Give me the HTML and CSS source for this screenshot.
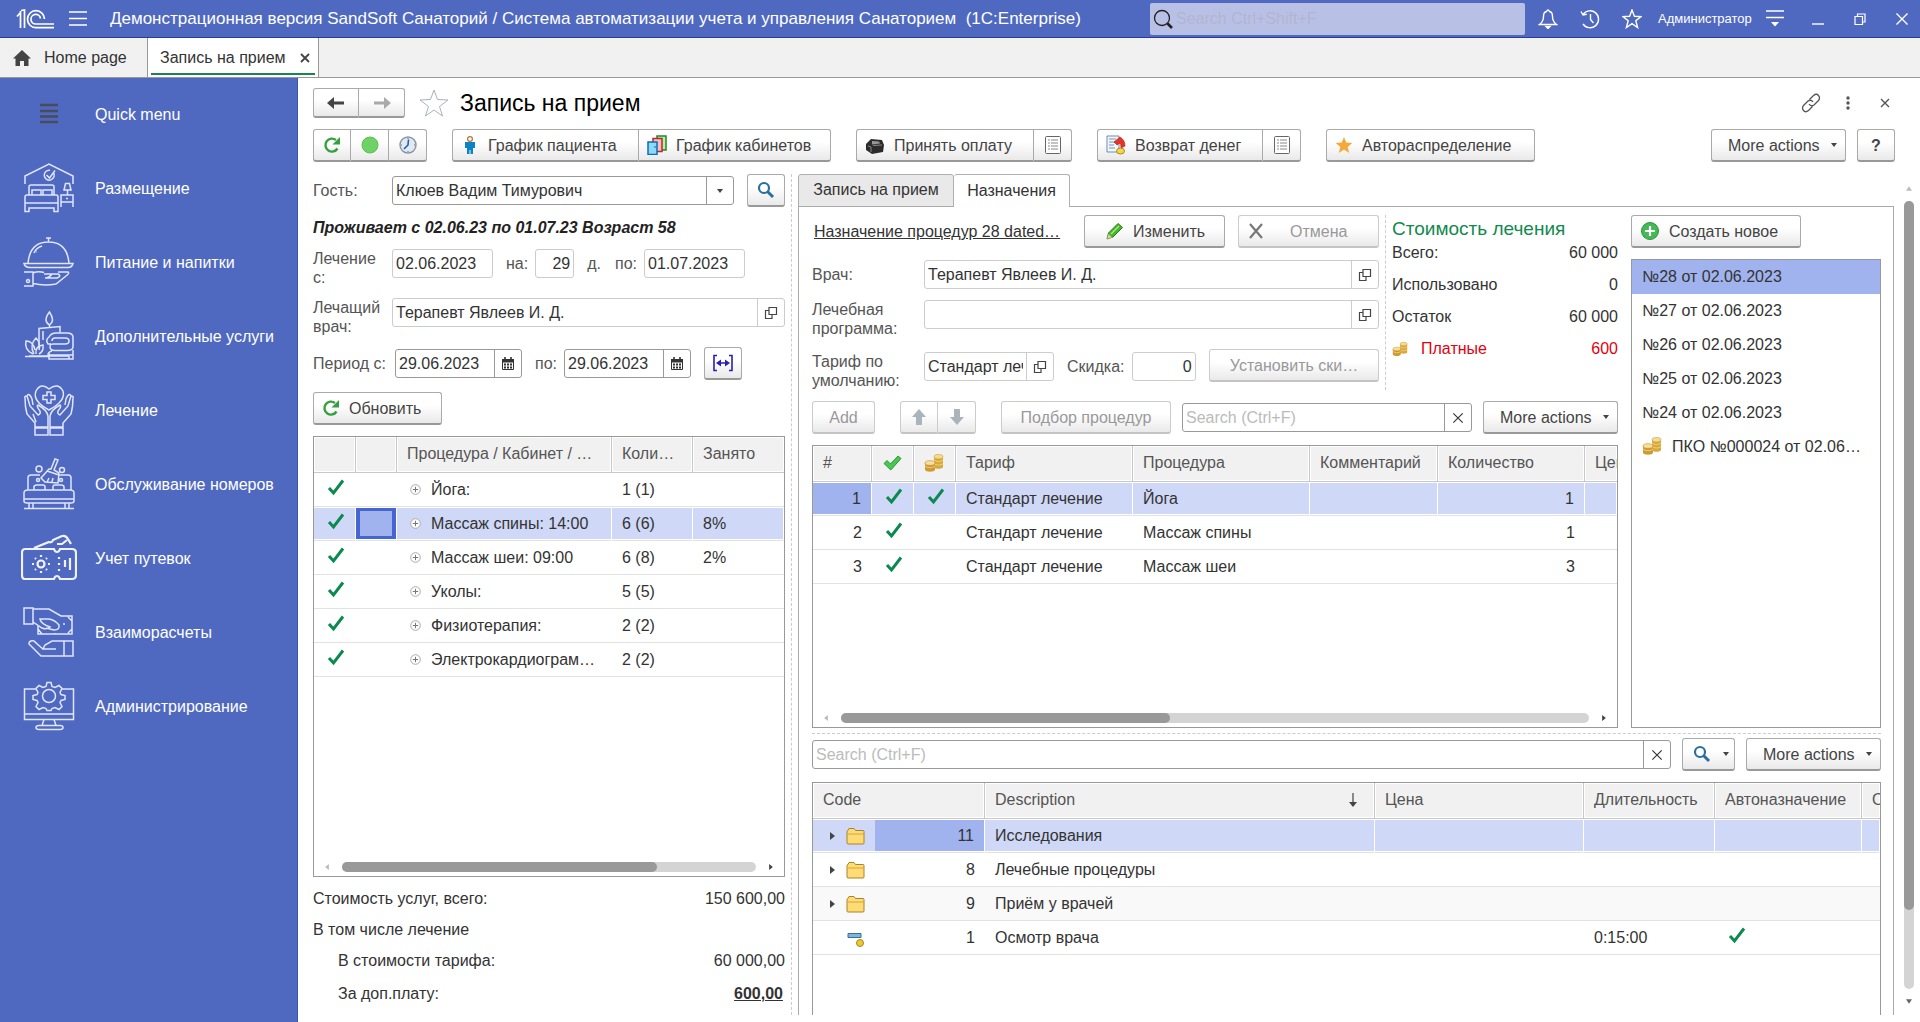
FILE: index.html
```html
<!DOCTYPE html>
<html lang="ru">
<head>
<meta charset="utf-8">
<title>Запись на прием</title>
<link rel="stylesheet" href="styles.css">
</head>
<body>
<svg class="sprite" aria-hidden="true">
  <symbol id="check" viewBox="0 0 18 18"><path d="M2 10l4.500 5L16 2.500" fill="none" stroke="#0b8a50" stroke-width="3"/></symbol>
  <symbol id="check-lime" viewBox="0 0 20 18"><path d="M2 9.500l3-3 3.500 3.500L16 2l3 2.500L8.800 16z" fill="#4cc552" stroke="#249a35" stroke-linejoin="round"/></symbol>
  <symbol id="coins" viewBox="0 0 20 20">
    <path d="M10 4v10c0 2.400 9 2.400 9 0V4z" fill="#d9a93c"/><path d="M10 7c2 2 7 2 9 0M10 10.500c2 2 7 2 9 0" fill="none" stroke="#efd27a"/><ellipse cx="14.500" cy="3.700" rx="4.500" ry="2.200" fill="#f3dd8c" stroke="#c99a3a" stroke-width=".6"/>
    <path d="M1 10v6.500c0 3 10 3 10 0V10z" fill="#cf9a35"/><path d="M1 13c2 2.200 8 2.200 10 0" fill="none" stroke="#efd27a"/><ellipse cx="6" cy="10" rx="5" ry="2.300" fill="#f5e19a" stroke="#c08d32" stroke-width=".6"/>
  </symbol>
  <symbol id="refresh" viewBox="0 0 18 18"><path d="M14.500 12.500A6.500 6.500 0 1 1 13 4" fill="none" stroke="#35a03f" stroke-width="2.400"/><path d="M17 1v7.500H9.500z" fill="#35a03f"/></symbol>
  <symbol id="caret" viewBox="0 0 6 4"><path d="M0 0h6L3 4z" fill="#444"/></symbol>
  <symbol id="open" viewBox="0 0 14 14"><path d="M5 1.500h7.500v7H5zM5 4.500H1.500v8H8V8.500" fill="none" stroke="#444" stroke-width="1.200"/></symbol>
  <symbol id="calendar" viewBox="0 0 14 14"><path d="M1.500 2.500h11v10h-11z" fill="none" stroke="#333"/><path d="M1 2h12v3.500H1z" fill="#333"/><path d="M4 0v3M10 0v3" stroke="#333" stroke-width="1.600"/><path d="M3 7.500h8M3 10.500h8" stroke="#333" stroke-width="1.800" stroke-dasharray="2 1"/></symbol>
  <symbol id="lens" viewBox="0 0 18 18"><circle cx="7" cy="7" r="5" fill="#fff" stroke="#2a6f9f" stroke-width="2.200"/><path d="M10.500 10.500L16 16" stroke="#2a6f9f" stroke-width="3"/></symbol>
  <symbol id="cross" viewBox="0 0 12 12"><path d="M2 2l8 8M10 2l-8 8" fill="none" stroke="currentColor"/></symbol>
  <symbol id="list" viewBox="0 0 16 18"><rect x=".5" y=".5" width="15" height="17" rx="1" fill="#fff" stroke="#666"/><path d="M3 4h2M3 7h2M3 10h2M3 13h2M6 4h7M6 7h7M6 10h7M6 13h7" stroke="#888"/></symbol>
  <symbol id="expand" viewBox="0 0 11 11"><circle cx="5.500" cy="5.500" r="4.800" fill="#fff" stroke="#aaa"/><path d="M2.800 5.500h5.400M5.500 2.800v5.400" stroke="#777"/></symbol>
  <symbol id="folder" viewBox="0 0 19 18"><path d="M1 16V4.500Q1 3.500 2 3.500l1-2h5l1.500 2H17q1 0 1 1V16q0 1-1 1H2q-1 0-1-1z" fill="#ffdc73" stroke="#a9822f"/><path d="M1 7h17" stroke="#d2a545"/></symbol>
  <symbol id="tri-right" viewBox="0 0 5 8"><path d="M0 0l5 4-5 4z" fill="currentColor"/></symbol>
  <symbol id="tri-left" viewBox="0 0 5 8"><path d="M5 0L0 4l5 4z" fill="currentColor"/></symbol>
  <symbol id="arrow-fat" viewBox="0 0 16 18"><path d="M8 1l7 8h-4v8H5V9H1z" fill="#aab4bb"/></symbol>
</svg>

<header class="topbar">
  <svg class="logo" viewBox="0 0 38 20" fill="none" stroke="#fff" stroke-width="1.700"><path d="M1 7.500l3.500-4M4.500 19V2M8.500 19V1L5 1.500"/><path d="M28.500 10A8.500 8.500 0 1 0 20 18.700H38"/><path d="M24.500 9.500A4.800 4.800 0 1 0 20 15H38M20.500 10"/></svg>
  <svg class="burger" viewBox="0 0 18 15" stroke="#fff" stroke-width="1.400"><path d="M0 1h18M0 7.500h18M0 14h18"/></svg>
  <span class="app-title">Демонстрационная версия SandSoft Санаторий / Система автоматизации учета и управления Санаторием&nbsp; (1С:Enterprise)</span>
  <label class="global-search">
    <svg viewBox="0 0 20 20" fill="none" stroke="#222"><circle cx="9" cy="9" r="7.500" stroke-width="1.300"/><path d="M14.500 14.500L19 19" stroke-width="2.600"/></svg>
    <input type="search" placeholder="Search Ctrl+Shift+F" aria-label="Search">
  </label>
  <div class="top-icons">
    <svg viewBox="0 0 20 20" fill="none" stroke="#fff" stroke-width="1.400"><path d="M1.500 15.500q4-3 4-8 0-4.500 3-5 1.500-3 3 0 3 .5 3 5 0 5 4 8z"/><path d="M8 17.500h4L10 19.500z" fill="#fff"/></svg>
    <svg viewBox="0 0 20 20" fill="none" stroke="#fff" stroke-width="1.400"><path d="M3 5.500A8.500 8.500 0 1 1 3 15M1 2.500l2 3.500 3.800-.8M10.500 5v5.500l3 3.500"/></svg>
    <svg viewBox="0 0 20 20" fill="none" stroke="#fff" stroke-width="1.400"><path d="M10 1l2.400 6.300 6.600.3-5.200 4.200 1.800 6.700L10 14.700l-5.600 3.800 1.800-6.700L1 7.600l6.600-.3z"/></svg>
  </div>
  <span class="user">Администратор</span>
  <svg class="user-menu" viewBox="0 0 18 17" stroke="#fff" stroke-width="1.400"><path d="M0 1h18M0 7.500h18"/><path d="M5 12h8l-4 4.500z" fill="#fff" stroke="none"/></svg>
  <div class="window-icons">
    <svg viewBox="0 0 12 12" stroke="#fff" stroke-width="1.400"><path d="M0 11h12"/></svg>
    <svg viewBox="0 0 12 12" fill="none" stroke="#fff" stroke-width="1.200"><path d="M1 3.500h7.500v8H1zM3.500 3.500V1H11v8H8.500"/></svg>
    <svg viewBox="0 0 12 12" stroke="#fff" stroke-width="1.400"><path d="M.5.5l11 11M11.500.5l-11 11"/></svg>
  </div>
</header>

<div class="tabs">
  <a class="tab tab-home" href="#"><svg viewBox="0 0 18 16"><path d="M9 0L0 8.500h2.500V16h4.500v-5h4v5h4.500V8.500H18z" fill="#444"/></svg>Home page</a>
  <a class="tab tab-active" href="#">Запись на прием<svg viewBox="0 0 10 10"><path d="M1 1l8 8M9 1L1 9" stroke="#444" stroke-width="1.800"/></svg></a>
</div>

<div class="body">
<nav class="sidebar">
  <a href="#"><svg viewBox="0 0 56 50"><path d="M19 16h18M19 22h18M19 27.500h18M19 33h18"/></svg>Quick menu</a>
  <a href="#"><svg viewBox="0 0 56 50"><path d="M4 21V13L28 1l24 12v8"/><path d="M32.500 9.500A5 5 0 1 1 29 7.200M25.500 12l3 3L34 7.500"/><path d="M8 32V24q0-2 2-2h21q2 0 2 2v8M11 32v-5h9v5M22 32v-5h9v5M4 48.500V34q0-2 2-2h29q2 0 2 2v14.500h-4V45H8v3.500zM4 40h33"/><path d="M43 27l1.500-6.500h4L50 27zM46.500 27v5M40 44V32h12v12M40 39h12M45 35.500h2"/></svg>Размещение</a>
  <a href="#"><svg viewBox="0 0 56 50"><path d="M25 1h5M27.500 1v4M7 26Q9 5 27.500 5T48 26M13 16q2-5 8-7M15 15h.5"/><path d="M3 26.500h49q-1 4-5 4H9q-5 0-6-4z"/><path d="M3 35h9v14H3M7 42.500a1.500 1.500 0 1 0 .1 0M12 36q5-2 11-.5M23 37h14q4 2-1 4H24q4 0 7-4M37 35h10q2 1-2 4l-10 8q-12 2-23-.5"/></svg>Питание и напитки</a>
  <a href="#"><svg viewBox="0 0 56 50"><path d="M28.500 1q-7 9 0 13 6-4 0-13zM28.500 14v3M18 36V17.500l21-2v6M22 20v9"/><path d="M30 33h-3q-3-4 1-7 2-4 7-4h11q6 0 6 4.500v9q0 4-6 4H34q-5 0-5-3.500t4-3h11q4 0 4-3t-4-3H34q-3 0-3 3M31 40q-4 1-4 4h25v-5M8 45h40M4 45.500h25M28 45v3h20v-3M28 42v6h24v-6"/><path d="M12 43Q3 39 5 30q7 0 9 9M13 43q-5-9 2-16 5 5 3 12M15 43q-1-8 7-9 1 6-4 9"/></svg>Дополнительные услуги</a>
  <a href="#"><svg viewBox="0 0 56 52"><path d="M28 26Q11 17 15 7q5-9 13-2 9-7 14 2 3 10-14 19z"/><path d="M26 8h4v3.500h4v4h-4V19h-4v-3.500h-4v-4h4z"/><path d="M4 14q-1-2 2-2l3 10 8 9q3-1 2-4-4-5-2-6 9 5 10 11v12H14v-5L6 30q-2-7-2-16zM15 38l-3-8M52 14q1-2-2-2l-3 10-8 9q-3-1-2-4 4-5 2-6-9 5-10 11v12h13v-5l8-9q2-7 2-16zM14 43v8h13v-8zM29 43v8h13v-8zM6 12q2-4 5 3l1 6M50 12q-2-4-5 3l-1 6"/></svg>Лечение</a>
  <a href="#"><svg viewBox="0 0 56 52"><path d="M7 32V20q0-3 3-3h9M38 17h9q3 0 3 3v12M3 39v-4q0-3 4-3h42q4 0 4 3v8q0 2-3 2H6q-3 0-3-2zM3 41h50M8 45v5M12 45v5M48 45v5M44 45v5M3 50.500h50M13 32v-3q0-2 3-2h6q2 0 2 2v3M32 32v-3q0-2 2-2h6q3 0 3 2v3"/><path d="M34 1l3 1-4 10 5 3-1 10-13-1-4-4 8-9h2zM26 13l12 4M28 20l-2 4M32 20l-1 4"/><circle cx="18" cy="11" r="3"/><circle cx="41" cy="12" r="2.500"/><circle cx="17" cy="22" r="1.500"/><circle cx="40" cy="22" r="1.500"/></svg>Обслуживание номеров</a>
  <a href="#"><svg class="bold" viewBox="0 0 56 46"><path d="M4 14h29q1 3 3 3t3-3h12q4 0 4 4v22q0 4-4 4H39q-1-3-3-3t-3 3H4q-3 0-3-4V18q0-4 3-4zM13 13l15-6q3 1 4-2l9-4q4-1 6 3l3 5M36 9h5l5-4"/><circle cx="20" cy="29" r="3.500"/><path d="M20 20v2M20 36v2M11 29h2M27 29h2M14 23l1 1M25 34l1 1M26 23l-1 1M15 34l-1 1M38 22v2M38 28v2M38 34v2M44 25v7M49 23v12"/></svg>Учет путевок</a>
  <a href="#"><svg viewBox="0 0 56 50"><path d="M3 1h9v16H3zM12 2h16l12 7h11v18H17v-9M12 15l9 6q5 2 8-1-9-3-10-8h9q6 1 10 6 1 5-5 5l-8-2M47 10l4 4M47 26l4-4M17 22l4 5M34 26v1M42 17h2"/><path d="M43 34h9v15h-9zM43 34H31l-7 4-2 4h13M22 42q-6-5-9-8-5-1-5 3l12 12h23"/></svg>Взаиморасчеты</a>
  <a href="#"><svg viewBox="0 0 56 50"><path d="M15 8H3.500v30.500h49V8H41M3.500 33h49M23 38.500l-2 6M33 38.500l2 6M18 44.500h21q3 0 3 2t-3 2H18q-3 0-3-2t3-2z"/><path d="M26 1.500h4l1 4 3 1 4-2 3 3-2 4 1 2 4 1v4l-4 1-1 2 2 4-3 3-4-2-3 1-1 2h-4l-1-2-3-1-4 2-3-3 2-4-1-2-4-1v-4l4-1 1-2-2-4 3-3 4 2 3-1z"/><circle cx="28" cy="15" r="6.500"/></svg>Администрирование</a>
</nav>

<main class="page">
  <div class="title-row">
    <div class="group">
      <button class="btn nav" aria-label="Назад"><svg viewBox="0 0 18 14"><path d="M7 1v4.500h10v3H7V13L0 7z" fill="#444"/></svg></button>
      <button class="btn nav" aria-label="Вперед"><svg viewBox="0 0 18 14"><path d="M11 1v4.500H1v3h10V13l7-6z" fill="#aaa"/></svg></button>
    </div>
    <svg class="fav" viewBox="0 0 30 28"><path d="M15 1l3.500 9.500L29 11l-8.500 6.500 3 9.500L15 21l-8.500 6 3-9.500L1 11l10.500-.5z" fill="#fff" stroke="#aab0ba"/></svg>
    <h1>Запись на прием</h1>
    <div class="title-icons">
      <svg viewBox="0 0 20 20" fill="none" stroke="#555" stroke-width="1.300"><path d="M8.500 6.500l4-4q3-2.500 5 0t0 5l-4.500 4.500q-3 2-5-1M11.500 13.500l-4 4q-3 2.500-5 0t0-5L7 8q3-2 5 1"/></svg>
      <svg viewBox="0 0 20 20" fill="#555"><circle cx="10" cy="5" r="1.700"/><circle cx="10" cy="10" r="1.700"/><circle cx="10" cy="15" r="1.700"/></svg>
      <svg viewBox="0 0 20 20" stroke="#555" stroke-width="1.400"><path d="M6 6l8 8M14 6l-8 8"/></svg>
    </div>
  </div>

  <div class="toolbar">
    <div class="group">
      <button class="btn icon-btn" aria-label="Обновить"><svg class="i18"><use href="#refresh"/></svg></button>
      <button class="btn icon-btn" aria-label="Статус"><svg class="i18" viewBox="0 0 18 18"><circle cx="9" cy="9" r="8" fill="#6fd267" stroke="#5cc055"/></svg></button>
      <button class="btn icon-btn" aria-label="Время"><svg class="i18" viewBox="0 0 18 18"><circle cx="9" cy="9" r="8" fill="#dfeaf5" stroke="#8796a6" stroke-width="1.400"/><path d="M9.500 3.500L9 9l-4 4" fill="none" stroke="#1f5fb0" stroke-width="1.600"/><path d="M9 2v1M9 15v1M2 9h1M15 9h1" stroke="#a55"/></svg></button>
    </div>
    <div class="group">
      <button class="btn text-btn w-patient"><svg class="i18" viewBox="0 0 18 18"><circle cx="9" cy="3" r="2.400" fill="#fff" stroke="#b8742c" stroke-width="1.200"/><path d="M4 6h10v6h-2v6H9.500v-4h-1v4H6v-6H4z" fill="#0c84c4"/></svg>График пациента</button>
      <button class="btn text-btn w-rooms"><svg class="i20" viewBox="0 0 20 20"><path d="M10 1h9v14h-9z" fill="#b9f0a8" stroke="#1a8a2c" stroke-width="1.500"/><path d="M6 3.500h9v13H6z" fill="#f7c1c1" stroke="#c8202c" stroke-width="1.500"/><path d="M1 7h9v12.500H1z" fill="#8fd8f7" stroke="#0a6fb5" stroke-width="1.500"/><path d="M7 12h2" stroke="#0a6fb5"/></svg>График кабинетов</button>
    </div>
    <div class="group">
      <button class="btn text-btn w-pay"><svg class="i20" viewBox="0 0 20 20"><path d="M1 9l5-5 11 1 2 5-1 7-11 2-6-4z" fill="#2c2c2c"/><path d="M7 6l7 .5 1 2-8 1z" fill="#999"/><path d="M3 11l3 1v5M8 10.500l9-.5" stroke="#888" fill="none"/></svg>Принять оплату</button>
      <button class="btn list-btn" aria-label="Список оплат"><svg class="list-icon"><use href="#list"/></svg></button>
    </div>
    <div class="group">
      <button class="btn text-btn w-refund"><svg class="i20" viewBox="0 0 20 20"><path d="M1 1h12v16H1z" fill="#f2f7fc" stroke="#6d8db0"/><path d="M3 4h7M3 7h6M3 10h5M3 13h6" stroke="#7a93ad"/><path d="M8 7l6-5q5 3 5 9l-4 2q0-4-1-5l-3 2z" fill="#e5332a" stroke="#a81b16" stroke-width=".6"/><ellipse cx="14.500" cy="16" rx="4" ry="3" fill="#f4d64a" stroke="#b28a1c"/></svg>Возврат денег</button>
      <button class="btn list-btn" aria-label="Список возвратов"><svg class="list-icon"><use href="#list"/></svg></button>
    </div>
    <button class="btn text-btn w-auto"><svg class="i18" viewBox="0 0 18 18"><path d="M9 1l2.300 5.600 6 .4-4.600 3.900 1.500 6L9 13.600 3.800 16.900l1.500-6L.7 7l6-.4z" fill="#f6a93b"/></svg>Автораспределение</button>
    <button class="btn more push">More actions<svg class="caret"><use href="#caret"/></svg></button>
    <button class="btn help">?</button>
  </div>

  <div class="content">
    <section class="left">
      <div class="row center">
        <label class="lab" for="guest">Гость:</label>
        <div class="field dark guest"><input id="guest" value="Клюев Вадим Тимурович"><button class="in-btn" aria-label="Выбрать"><svg class="caret"><use href="#caret"/></svg></button></div>
        <button class="btn icon-btn" aria-label="Найти"><svg class="i18"><use href="#lens"/></svg></button>
      </div>
      <p class="stay">Проживает с 02.06.23 по 01.07.23 Возраст 58</p>
      <div class="row">
        <label class="lab" for="treat-from">Лечение с:</label>
        <div class="field date"><input id="treat-from" value="02.06.2023"></div>
        <label class="mid" for="days">на:</label>
        <div class="field days"><input class="num" id="days" value="29"></div>
        <span class="mid unit">д.</span>
        <label class="mid" for="treat-to">по:</label>
        <div class="field date"><input id="treat-to" value="01.07.2023"></div>
      </div>
      <div class="row">
        <label class="lab" for="doctor">Лечащий врач:</label>
        <div class="field grow"><input id="doctor" value="Терапевт Явлеев И. Д."><button class="in-btn" aria-label="Открыть"><svg class="i14"><use href="#open"/></svg></button></div>
      </div>
      <div class="row center">
        <label class="lab-period" for="from">Период с:</label>
        <div class="field dark period"><input id="from" value="29.06.2023"><button class="in-btn" aria-label="Календарь"><svg class="i14"><use href="#calendar"/></svg></button></div>
        <label class="mid" for="to">по:</label>
        <div class="field dark period"><input id="to" value="29.06.2023"><button class="in-btn" aria-label="Календарь"><svg class="i14"><use href="#calendar"/></svg></button></div>
        <button class="btn icon-btn range" aria-label="Интервал"><svg viewBox="0 0 22 18"><path d="M5 1.500H2v15h3M17 1.500h3v15h-3M6 9h10" fill="none" stroke="#2b1fb0" stroke-width="1.600"/><path d="M9 5.500v7L4 9zM13 5.500v7L18 9z" fill="#2b1fb0"/></svg></button>
      </div>
      <button class="btn text-btn w-refresh"><svg class="i18"><use href="#refresh"/></svg>Обновить</button>
      <div class="grid-box left-grid">
        <table class="t-left">
          <colgroup><col class="c42"><col class="c41"><col><col class="c81"><col class="c91"></colgroup>
          <thead><tr><th></th><th></th><th>Процедура / Кабинет / …</th><th>Коли…</th><th>Занято</th></tr></thead>
          <tbody>
            <tr><td class="mark"><svg><use href="#check"/></svg></td><td></td><td class="tree"><svg><use href="#expand"/></svg>Йога:</td><td>1 (1)</td><td></td></tr>
            <tr class="sel"><td class="mark"><svg><use href="#check"/></svg></td><td class="focus"></td><td class="tree"><svg><use href="#expand"/></svg>Массаж спины: 14:00</td><td>6 (6)</td><td>8%</td></tr>
            <tr><td class="mark"><svg><use href="#check"/></svg></td><td></td><td class="tree"><svg><use href="#expand"/></svg>Массаж шеи: 09:00</td><td>6 (8)</td><td>2%</td></tr>
            <tr><td class="mark"><svg><use href="#check"/></svg></td><td></td><td class="tree"><svg><use href="#expand"/></svg>Уколы:</td><td>5 (5)</td><td></td></tr>
            <tr><td class="mark"><svg><use href="#check"/></svg></td><td></td><td class="tree"><svg><use href="#expand"/></svg>Физиотерапия:</td><td>2 (2)</td><td></td></tr>
            <tr><td class="mark"><svg><use href="#check"/></svg></td><td></td><td class="tree"><svg><use href="#expand"/></svg>Электрокардиограм…</td><td>2 (2)</td><td></td></tr>
          </tbody>
        </table>
        <div class="hscroll"><svg class="off"><use href="#tri-left"/></svg><div class="track"><div class="thumb thumb-left"></div></div><svg><use href="#tri-right"/></svg></div>
      </div>
      <dl class="totals">
        <dt>Стоимость услуг, всего:</dt><dd>150 600,00</dd>
        <dt>В том числе лечение</dt><dd></dd>
        <dt class="sub">В стоимости тарифа:</dt><dd>60 000,00</dd>
        <dt class="sub last">За доп.плату:</dt><dd class="last"><a href="#">600,00</a></dd>
      </dl>
    </section>

    <section class="right">
      <div class="panel-tabs"><button class="ptab">Запись на прием</button><button class="ptab on">Назначения</button></div>
      <div class="panel">
        <div class="upper">
          <div class="upper-main">
            <div class="head">
              <div class="form">
                <div class="row center">
                  <a class="doc-link" href="#">Назначение процедур 28 dated…</a>
                  <button class="btn text-btn w-edit"><svg class="i18" viewBox="0 0 18 18"><path d="M1 17l1.500-6L12 1.500l4.500 4L7 15z" fill="#45b52c" stroke="#2b7d1b"/><path d="M5 12l8-8" stroke="#a6ec8a" stroke-width="1.500"/><path d="M1 17l1.500-5 3.500 3.500z" fill="#e8c89a"/></svg>Изменить</button>
                  <button class="btn text-btn w-cancel" disabled><svg class="i18" viewBox="0 0 18 18"><path d="M3 2l12 14M15 2L3 16" stroke="#777" stroke-width="2.200"/></svg>Отмена</button>
                </div>
                <div class="row center doc-row">
                  <label class="rlab" for="doc2">Врач:</label>
                  <div class="field grow"><input id="doc2" value="Терапевт Явлеев И. Д."><button class="in-btn" aria-label="Открыть"><svg class="i14"><use href="#open"/></svg></button></div>
                </div>
                <div class="row">
                  <label class="rlab" for="prog">Лечебная программа:</label>
                  <div class="field grow"><input id="prog" value=""><button class="in-btn" aria-label="Открыть"><svg class="i14"><use href="#open"/></svg></button></div>
                </div>
                <div class="row tariff-row">
                  <label class="rlab" for="tariff">Тариф по умолчанию:</label>
                  <div class="field tariff"><input id="tariff" value="Стандарт лечение"><button class="in-btn" aria-label="Открыть"><svg class="i14"><use href="#open"/></svg></button></div>
                  <label class="mid" for="disc">Скидка:</label>
                  <div class="field disc"><input class="num" id="disc" value="0"></div>
                  <button class="btn w-disc" disabled>Установить ски…</button>
                </div>
              </div>
              <div class="cost">
                <h2>Стоимость лечения</h2>
                <dl>
                  <dt>Всего:</dt><dd>60 000</dd>
                  <dt>Использовано</dt><dd>0</dd>
                  <dt>Остаток</dt><dd>60 000</dd>
                  <dt class="paid"><svg><use href="#coins"/></svg>Платные</dt><dd class="paid">600</dd>
                </dl>
              </div>
            </div>
            <div class="row center actions">
              <button class="btn w-add" disabled>Add</button>
              <div class="group arrows">
                <button class="btn icon-btn" disabled aria-label="Вверх"><svg class="i18"><use href="#arrow-fat"/></svg></button>
                <button class="btn icon-btn" disabled aria-label="Вниз"><svg class="i18 flip"><use href="#arrow-fat"/></svg></button>
              </div>
              <button class="btn w-pick" disabled>Подбор процедур</button>
              <div class="field dark grow search"><input type="text" placeholder="Search (Ctrl+F)" aria-label="Поиск процедур"><button class="in-btn" aria-label="Очистить"><svg class="i14"><use href="#cross"/></svg></button></div>
              <button class="btn more">More actions<svg class="caret"><use href="#caret"/></svg></button>
            </div>
            <div class="grid-box mid-grid">
              <table class="t-mid">
                <colgroup><col class="c59"><col class="c42"><col class="c42"><col class="c177"><col class="c177"><col class="c128"><col class="c147"><col></colgroup>
                <thead><tr><th>#</th><th class="ico"><svg><use href="#check-lime"/></svg></th><th class="ico"><svg><use href="#coins"/></svg></th><th>Тариф</th><th>Процедура</th><th>Комментарий</th><th>Количество</th><th class="cut">Цена</th></tr></thead>
                <tbody>
                  <tr class="sel"><td class="num cur">1</td><td class="mark"><svg><use href="#check"/></svg></td><td class="mark"><svg><use href="#check"/></svg></td><td>Стандарт лечение</td><td>Йога</td><td></td><td class="num">1</td><td></td></tr>
                  <tr><td class="num">2</td><td class="mark"><svg><use href="#check"/></svg></td><td></td><td>Стандарт лечение</td><td>Массаж спины</td><td></td><td class="num">1</td><td></td></tr>
                  <tr><td class="num">3</td><td class="mark"><svg><use href="#check"/></svg></td><td></td><td>Стандарт лечение</td><td>Массаж шеи</td><td></td><td class="num">3</td><td></td></tr>
                </tbody>
              </table>
              <div class="hscroll"><svg class="off"><use href="#tri-left"/></svg><div class="track"><div class="thumb thumb-mid"></div></div><svg><use href="#tri-right"/></svg></div>
            </div>
          </div>
          <aside class="docs">
            <button class="btn text-btn w-new"><svg class="i20" viewBox="0 0 20 20"><circle cx="10" cy="10" r="8.500" fill="#45b955" stroke="#2c9440"/><path d="M10 5v10M5 10h10" stroke="#fff" stroke-width="2.200"/></svg>Создать новое</button>
            <ul class="doc-list">
              <li class="on">№28 от 02.06.2023</li>
              <li>№27 от 02.06.2023</li>
              <li>№26 от 02.06.2023</li>
              <li>№25 от 02.06.2023</li>
              <li>№24 от 02.06.2023</li>
              <li><svg class="i20"><use href="#coins"/></svg>ПКО №000024 от 02.06…</li>
            </ul>
          </aside>
        </div>
        <div class="lower">
          <div class="row center lower-bar">
            <div class="field dark grow"><input type="text" placeholder="Search (Ctrl+F)" aria-label="Поиск в каталоге"><button class="in-btn" aria-label="Очистить"><svg class="i14"><use href="#cross"/></svg></button></div>
            <button class="btn find" aria-label="Найти"><svg class="i18"><use href="#lens"/></svg><svg class="caret"><use href="#caret"/></svg></button>
            <button class="btn more">More actions<svg class="caret"><use href="#caret"/></svg></button>
          </div>
          <div class="grid-box low-grid">
            <table class="t-low">
              <colgroup><col class="c62"><col class="c110"><col><col class="c209"><col class="c131"><col class="c147"><col class="c18"></colgroup>
              <thead><tr><th colspan="2">Code</th><th><span class="sort">Description<svg viewBox="0 0 8 14"><path d="M4 0v12" stroke="#444" stroke-width="1.200"/><path d="M0 9h8l-4 5z" fill="#444"/></svg></span></th><th>Цена</th><th>Длительность</th><th>Автоназначение</th><th class="cut">Описание</th></tr></thead>
              <tbody>
                <tr class="sel"><td class="fold"><svg class="tri"><use href="#tri-right"/></svg><svg class="fi"><use href="#folder"/></svg></td><td class="num cur">11</td><td>Исследования</td><td></td><td></td><td></td><td></td></tr>
                <tr><td class="fold"><svg class="tri"><use href="#tri-right"/></svg><svg class="fi"><use href="#folder"/></svg></td><td class="num">8</td><td>Лечебные процедуры</td><td></td><td></td><td></td><td></td></tr>
                <tr class="alt"><td class="fold"><svg class="tri"><use href="#tri-right"/></svg><svg class="fi"><use href="#folder"/></svg></td><td class="num">9</td><td>Приём у врачей</td><td></td><td></td><td></td><td></td></tr>
                <tr><td class="fold leaf"><svg class="fi" viewBox="0 0 19 18"><path d="M2 4.500h13v4H2z" fill="#7fb4dc" stroke="#3a6c9c"/><circle cx="14" cy="14" r="3.500" fill="#ecc92f" stroke="#a98520"/></svg></td><td class="num">1</td><td>Осмотр врача</td><td></td><td>0:15:00</td><td class="mark"><svg><use href="#check"/></svg></td><td></td></tr>
              </tbody>
            </table>
          </div>
        </div>
      </div>
    </section>

    <div class="vscroll"><svg class="off" viewBox="0 0 8 6"><path d="M0 6h8L4 0z" fill="currentColor"/></svg><div class="vtrack"><div class="vthumb"></div></div><svg viewBox="0 0 8 6"><path d="M0 0h8L4 6z" fill="currentColor"/></svg></div>
  </div>
</main>
</div>
</body>
</html>
```
FILE: styles.css
```css
* { box-sizing: border-box; }
body {
  margin: 0;
  height: 100vh;
  display: flex;
  flex-direction: column;
  overflow: hidden;
  background: #fff;
  color: #333;
  font: 16px/19px Arial, "Liberation Sans", sans-serif;
}
svg { flex: none; display: block; }
.sprite { position: absolute; width: 0; height: 0; }
input, button { font: inherit; color: inherit; }
a { color: inherit; text-decoration: none; }
h1, h2, p, dl, dd, ul { margin: 0; padding: 0; }

/* Top bar */
.topbar {
  display: flex;
  align-items: center;
  height: 38px;
  padding: 0 12px 0 16px;
  background: #5069c0;
  border-bottom: 1px solid #2a3a96;
  color: #fff;
}
.logo { width: 38px; height: 20px; }
.burger { width: 18px; height: 15px; margin: 0 23px 0 15px; }
.app-title { flex: 1; font-size: 17px; white-space: nowrap; overflow: hidden; }
.global-search {
  display: flex;
  align-items: center;
  width: 375px;
  height: 32px;
  padding-left: 3px;
  gap: 3px;
  background: #b9c0e5;
  border-radius: 2px;
}
.global-search svg { width: 20px; height: 20px; }
.global-search input { flex: 1; border: 0; background: none; outline: 0; padding: 0; }
.global-search input::placeholder { color: #b0b6d2; }
.top-icons { display: flex; gap: 22px; margin: 0 16px 0 13px; }
.top-icons svg { width: 20px; height: 20px; }
.user { font-size: 13px; width: 93px; }
.user-menu { width: 18px; height: 17px; margin: 0 28px 0 15px; }
.window-icons { display: flex; gap: 30px; }
.window-icons svg { width: 12px; height: 12px; }

/* Open windows */
.tabs { display: flex; height: 40px; background: #f1f1f1; border-bottom: 1px solid #999; }
.tab { display: flex; align-items: center; color: #333; }
.tab-home { width: 147px; padding-left: 13px; gap: 13px; }
.tab-home svg { width: 18px; height: 16px; }
.tab-active {
  width: 172px;
  padding: 0 8px 0 12px;
  justify-content: space-between;
  background: linear-gradient(#1a8450, #1a8450) center bottom 2px / calc(100% - 6px) 2px no-repeat #fff;
  border: solid #999;
  border-width: 0 1px;
}
.tab-active svg { width: 10px; height: 10px; }

.body { flex: 1; display: flex; min-height: 0; }
.sidebar { width: 298px; flex: none; background: #5069c0; border-right: 1px solid #42539f; }
.sidebar a { display: flex; align-items: center; height: 74px; padding: 0 0 2px 21px; gap: 18px; color: #fff; white-space: nowrap; }
.sidebar svg { width: 56px; height: 52px; fill: none; stroke: #dfe5fa; stroke-width: 1.5; }
.sidebar a:first-child svg { stroke: #474b5e; stroke-width: 2.6; }
.sidebar svg.bold { stroke: #f0f3ff; stroke-width: 2.2; }

/* Page header */
.page { flex: 1; min-width: 0; display: flex; flex-direction: column; padding: 10px 6px 7px 15px; }
.title-row { display: flex; align-items: center; height: 30px; }
.title-row .fav { width: 30px; height: 28px; margin: 0 11px 0 14px; }
h1 { font-size: 23px; line-height: 30px; font-weight: 400; color: #000; }
.title-icons { display: flex; gap: 17px; margin: 0 19px 0 auto; }
.title-icons svg { width: 20px; height: 20px; }
.toolbar { display: flex; height: 33px; margin: 11px 19px 12px 0; gap: 25px; }
.push { margin-left: auto; }
.help { width: 38px; margin-left: -14px; font-weight: 700; }

.btn {
  display: flex;
  align-items: center;
  justify-content: center;
  height: 33px;
  padding: 0 10px;
  background: linear-gradient(#fff 40%, #e9e9e9);
  border: 1px solid #aaa;
  border-bottom: 2px solid #999;
  border-radius: 3px;
  color: #444;
  white-space: nowrap;
}
.btn:disabled { border-color: #ccc; border-bottom-color: #c4c4c4; color: #999; }
.group { display: flex; }
.group .btn + .btn { border-left: 0; border-top-left-radius: 0; border-bottom-left-radius: 0; }
.group .btn:first-child { border-top-right-radius: 0; border-bottom-right-radius: 0; }
.group .btn:nth-child(2):not(:last-child) { border-radius: 0; }
.btn.text-btn { justify-content: flex-start; padding: 0 0 0 8px; gap: 9px; }
.btn.nav { width: 46px; height: 30px; padding: 0; }
.nav svg { width: 18px; height: 14px; }
.btn.icon-btn { width: 38px; padding: 0; flex: none; }
.btn.list-btn { width: 38px; padding: 0; }
.list-icon { width: 16px; height: 18px; }
.i18 { width: 18px; height: 18px; }
.i20 { width: 20px; height: 20px; }
.i14 { width: 14px; height: 14px; }
.flip { transform: rotate(180deg); }
.w-patient { width: 187px; }
.w-rooms { width: 192px; }
.w-pay { width: 178px; }
.w-refund { width: 166px; }
.w-auto { width: 209px; }
.more { width: 135px; padding: 0 8px 0 16px; justify-content: space-between; flex: none; }
.caret { width: 6px; height: 4px; }
.w-refresh { width: 129px; }
.btn.w-edit { width: 141px; padding-left: 21px; flex: none; }
.btn.w-cancel { width: 141px; gap: 25px; margin-left: 13px; flex: none; }
.w-disc { width: 170px; }
.w-add { width: 63px; }
.w-pick { width: 170px; }
.w-new { width: 170px; }
.find { width: 53px; gap: 12px; padding: 0 0 0 4px; flex: none; }

.content { flex: 1; display: flex; min-height: 0; }

/* Fields */
.row { display: flex; align-items: flex-start; }
.center { align-items: center; }
.field { display: flex; height: 29px; border: 1px solid #ccc; border-radius: 3px; background: #fff; min-width: 0; }
.field.dark { border-color: #999; }
.field input { flex: 1; width: 100%; min-width: 0; border: 0; outline: 0; background: none; padding: 0 3px; }
.field input.num { text-align: right; }
.field input::placeholder { color: #bbb; }
.in-btn { display: flex; align-items: center; justify-content: center; width: 27px; flex: none; padding: 0; border: 0; border-left: 1px solid #ccc; background: none; }
.dark .in-btn { border-left-color: #999; }
.grow { flex: 1; }
.mid { line-height: 29px; color: #555; margin: 0 7px 0 13px; }
.unit { margin-right: 1px; }
.lab { width: 79px; flex: none; color: #555; }
.lab-period { width: 82px; flex: none; color: #555; }
.rlab { width: 112px; flex: none; padding-right: 20px; color: #555; }

/* Left column */
.left { width: 479px; flex: none; display: flex; flex-direction: column; padding-right: 6px; border-right: 1px dashed #ccc; }
.guest { flex: 1; margin-right: 13px; }
.stay { line-height: 42px; font-weight: 700; font-style: italic; white-space: nowrap; color: #222; }
.left .row + .row { margin-top: 11px; }
.date { width: 101px; }
.days { width: 39px; }
.period { width: 127px; }
.range { margin-left: 13px; }
.range svg { width: 22px; height: 18px; }
.left .w-refresh { margin: 12px 0 11px; }
.left-grid { flex: 1; }
.totals { display: grid; grid-template-columns: 1fr auto; padding: 6px 0; line-height: 31px; }
.totals dd { text-align: right; }
.totals a { font-weight: 700; text-decoration: underline; margin-right: 2px; }
.totals .sub { padding-left: 25px; }
.totals .last { padding-top: 2px; }

/* Tables */
.grid-box { border: 1px solid #999; background: #fff; display: flex; flex-direction: column; min-height: 0; overflow: hidden; }
table { width: 100%; table-layout: fixed; border-collapse: separate; border-spacing: 0; }
th, td { overflow: hidden; text-overflow: ellipsis; white-space: nowrap; text-align: left; font-weight: 400; padding: 0 10px; }
th { height: 36px; padding-bottom: 2px; background: #f1f1f1; color: #555; border-right: 1px solid #c8c8c8; border-bottom: 1px solid #c8c8c8; box-shadow: inset 1px 1px #fff, inset -1px -1px #fff; }
td { height: 34px; border-bottom: 1px solid #e2e2e2; }
th:last-child { border-right: 0; }
th.cut { text-overflow: clip; padding-right: 0; }
.sel td { background: #cfd8f7; border-right: 1px solid #fff; box-shadow: inset 0 1px #fff, inset 0 -1px #fff; }
.sel td.cur { background: #a0b3ee; }
.sel td.focus { background: #a0b3ee; box-shadow: inset 0 1px #fff, inset 0 -1px #fff, inset 0 0 0 4px #4566d0; }
.alt td { background: #f9f9f9; }
td.num { text-align: right; }
td.mark { padding: 0 0 6px 13px; }
.mark svg { width: 18px; height: 18px; }
.ico svg { width: 20px; height: 20px; }
.tree svg { display: inline-block; width: 11px; height: 11px; margin: 0 10px 0 3px; }
td.fold { padding: 0 0 0 17px; }
.sel td.fold { border-right: 0; }
.fold svg { display: inline-block; vertical-align: middle; }
.tri { width: 5px; height: 8px; margin-right: 11px; color: #444; }
.fi { width: 19px; height: 18px; }
td.fold.leaf { padding-left: 33px; }
.sort { display: flex; align-items: center; justify-content: space-between; padding-right: 7px; }
.sort svg { width: 8px; height: 14px; }
.c18 { width: 18px; } .c41 { width: 41px; } .c42 { width: 42px; } .c59 { width: 59px; } .c62 { width: 62px; }
.c81 { width: 81px; } .c91 { width: 91px; } .c110 { width: 110px; } .c128 { width: 128px; }
.c131 { width: 131px; } .c147 { width: 147px; } .c177 { width: 177px; } .c209 { width: 209px; }

.hscroll { display: flex; align-items: center; height: 10px; gap: 13px; margin: auto 11px 4px; color: #444; }
.hscroll svg { width: 4px; height: 6px; }
.off { color: #bbb; }
.track { flex: 1; height: 10px; border-radius: 5px; background: #d4d4d4; }
.thumb { height: 10px; border-radius: 5px; background: #999; }
.thumb-left { width: 76%; }
.thumb-mid { width: 44%; }

/* Right panel */
.right { flex: 1; min-width: 0; display: flex; flex-direction: column; margin-left: 6px; }
.panel-tabs { display: flex; height: 33px; }
.ptab { height: 33px; padding: 0 10px 2px; background: #e9e9e9; border: 1px solid #b0b0b0; border-radius: 3px 3px 0 0; color: #333; width: 156px; }
.ptab.on { background: #fff; border-bottom: 0; border-left: 0; width: 116px; position: relative; }
.panel { flex: 1; min-height: 0; display: flex; flex-direction: column; margin-top: -1px; padding: 8px 12px 0 13px; border: 1px solid #aaa; border-bottom: 0; }
.upper { display: flex; gap: 13px; padding-bottom: 5px; border-bottom: 1px dashed #ccc; }
.upper-main { flex: 1; min-width: 0; }
.head { display: flex; }
.form { flex: 1; min-width: 0; padding-right: 6px; margin-right: 6px; border-right: 1px dashed #ccc; }
.doc-link { flex: 1; min-width: 0; overflow: hidden; white-space: nowrap; text-decoration: underline; margin: 0 14px 0 2px; }
.doc-row { margin: 12px 0 11px; }
.tariff-row { margin-top: 11px; }
.tariff-row .rlab, .tariff-row .field, .tariff-row .mid { margin-top: 3px; }
.tariff { width: 130px; }
.disc { width: 64px; }
.w-disc { margin-left: auto; }
.cost { width: 226px; flex: none; }
.cost h2 { font-size: 19px; line-height: 28px; font-weight: 400; color: #118a4e; }
.cost dl { display: grid; grid-template-columns: 1fr auto; row-gap: 13px; }
.cost dt { display: flex; align-items: center; }
.cost dt svg { width: 16px; height: 16px; margin-right: 13px; }
.cost dd { text-align: right; }
.cost .paid { color: #e3000f; }
.actions { margin: 11px 0; }
.arrows { margin: 0 25px; }
.actions .search { margin: 0 11px; }
.mid-grid { height: 283px; }
.docs { width: 250px; flex: none; display: flex; flex-direction: column; }
.doc-list { flex: 1; margin-top: 11px; border: 1px solid #999; list-style: none; }
.doc-list li { display: flex; align-items: center; gap: 10px; height: 34px; padding: 0 0 2px 10px; white-space: nowrap; }
.doc-list .on { background: #a0b3ee; }
.lower { flex: 1; min-height: 0; display: flex; flex-direction: column; padding-top: 4px; }
.lower-bar { gap: 11px; margin-bottom: 11px; }
.low-grid { flex: 1; border-bottom: 0; }

/* Page scrollbar */
.vscroll { width: 10px; margin-left: 10px; display: flex; flex-direction: column; align-items: center; padding: 12px 0 11px; gap: 10px; color: #666; }
.vscroll svg { width: 6px; height: 5px; }
.vscroll .off { color: #bbb; }
.vtrack { flex: 1; width: 10px; border-radius: 5px; background: #d4d4d4; }
.vthumb { height: 90%; border-radius: 5px; background: #999; }
```
